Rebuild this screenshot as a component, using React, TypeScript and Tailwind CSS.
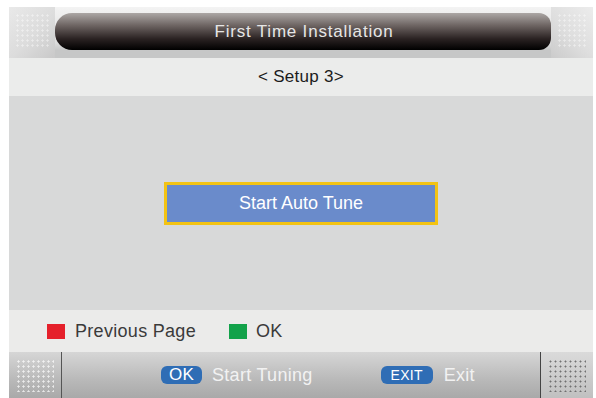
const dots =
  "bg-[radial-gradient(circle,rgba(255,255,255,0.9)_0.9px,transparent_1.3px)] bg-[length:5px_5px]";

function DottedCorner({ side }: { side: "left" | "right" }) {
  return (
    <div
      className={`relative h-full shrink-0 overflow-hidden ${
        side === "left"
          ? "w-[46px] bg-[linear-gradient(135deg,#e9e9e9_0%,#dcdcdc_55%,#c9c9c9_100%)]"
          : "w-[42px] bg-[linear-gradient(225deg,#ececec_0%,#dedede_55%,#cbcbcb_100%)]"
      }`}
    >
      <div className={`absolute inset-x-[6px] top-[6px] h-[34px] opacity-50 ${dots}`} />
    </div>
  );
}

function KeyPill({ label, wide }: { label: string; wide?: boolean }) {
  return (
    <span
      className={`inline-flex h-[18px] items-center justify-center rounded-[6px] bg-[#2f6db5] text-white ${
        wide ? "w-[52px] text-[14px]" : "w-[41px] text-[17px]"
      }`}
    >
      {label}
    </span>
  );
}

export default function App() {
  return (
    <div className="h-[398px] w-[596px] overflow-hidden bg-white font-['Liberation_Sans',Arial,sans-serif]">
      <div className="ml-[9px] w-[584px] pt-[7px]">
        {/* header */}
        <div className="flex h-[51px] bg-[linear-gradient(#f3f3f3,#dddddd_70%,#c6c7c7_85%,#c6c7c7)]">
          <DottedCorner side="left" />
          <div className="mt-[6px] flex h-[37px] flex-1 items-center justify-center rounded-l-[17px] rounded-r-[12px] bg-[linear-gradient(#aca7a5,#6b6260_35%,#2a2222_70%,#000000)]">
            <span className="pl-[2px] text-[17px] tracking-[0.8px] text-[#e6e6e6]">
              First Time Installation
            </span>
          </div>
          <DottedCorner side="right" />
        </div>

        {/* step row */}
        <div className="flex h-[38px] items-center justify-center bg-[#ebeceb] text-[17px] tracking-[0.3px] text-[#1b1b1b]">
          &lt; Setup 3&gt;
        </div>

        {/* main area */}
        <div className="flex h-[214px] items-center justify-center bg-[#d8d9d9]">
          <div className="flex h-[43px] w-[274px] items-center justify-center border-[3px] border-[#f3c313] bg-[#6a8bcb] text-[18px] text-white">
            Start Auto Tune
          </div>
        </div>

        {/* legend */}
        <div className="flex h-[42px] items-center bg-[#ebebea] pl-[38px] text-[18px] tracking-[0.3px] text-[#3a3a3a]">
          <span className="h-[15px] w-[18px] bg-[#e5202b]" />
          <span className="ml-[10px]">Previous Page</span>
          <span className="ml-[33px] h-[15px] w-[18px] bg-[#12a24a]" />
          <span className="ml-[9px]">OK</span>
        </div>

        {/* bottom bar */}
        <div className="flex h-[46px] bg-[linear-gradient(#d6d6d6,#b9b9b9_60%,#a9a9a9)]">
          <div className="flex w-[53px] shrink-0 items-center justify-center border-r border-[#555]">
            <div className={`h-[33px] w-[38px] opacity-80 ${dots}`} />
          </div>
          <div className="flex flex-1 items-center text-[18px] tracking-[0.3px] text-[#f2f2f2]">
            <span className="ml-[99px] flex">
              <KeyPill label="OK" />
            </span>
            <span className="ml-[10px]">Start Tuning</span>
            <span className="ml-[68px] flex">
              <KeyPill label="EXIT" wide />
            </span>
            <span className="ml-[11px]">Exit</span>
          </div>
          <div className="flex w-[53px] shrink-0 items-center justify-center border-l border-[#444] bg-[linear-gradient(#dadada,#c0c0c0)]">
            <div className="h-[33px] w-[38px] bg-[radial-gradient(circle,rgba(90,90,90,0.8)_0.8px,transparent_1.2px)] bg-[length:5px_5px]" />
          </div>
        </div>
      </div>
    </div>
  );
}
